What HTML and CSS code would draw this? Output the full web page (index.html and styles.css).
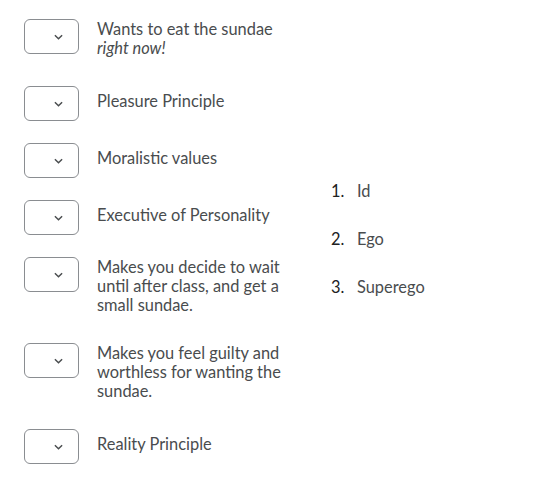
FILE: index.html
```html
<html lang="en">
<head>
    <meta charset="UTF-8">
    <title>Matching</title>
    <link rel="stylesheet" href="styles.css">
</head>
<body>
<div class="question">
    <div class="matches">
        <div class="row">
            <div class="select"><svg class="chev" viewBox="0 0 10 6"><path d="M1 1 L5 5 L9 1"/></svg></div>
            <div class="label">Wants to eat the sundae<br><em>right now!</em></div>
        </div>
        <div class="row">
            <div class="select"><svg class="chev" viewBox="0 0 10 6"><path d="M1 1 L5 5 L9 1"/></svg></div>
            <div class="label single">Pleasure Principle</div>
        </div>
        <div class="row">
            <div class="select"><svg class="chev" viewBox="0 0 10 6"><path d="M1 1 L5 5 L9 1"/></svg></div>
            <div class="label single">Moralistic values</div>
        </div>
        <div class="row">
            <div class="select"><svg class="chev" viewBox="0 0 10 6"><path d="M1 1 L5 5 L9 1"/></svg></div>
            <div class="label single">Executive of Personality</div>
        </div>
        <div class="row">
            <div class="select"><svg class="chev" viewBox="0 0 10 6"><path d="M1 1 L5 5 L9 1"/></svg></div>
            <div class="label">Makes you decide to wait until after class, and get a small sundae.</div>
        </div>
        <div class="row">
            <div class="select"><svg class="chev" viewBox="0 0 10 6"><path d="M1 1 L5 5 L9 1"/></svg></div>
            <div class="label">Makes you feel guilty and worthless for wanting the sundae.</div>
        </div>
        <div class="row">
            <div class="select"><svg class="chev" viewBox="0 0 10 6"><path d="M1 1 L5 5 L9 1"/></svg></div>
            <div class="label single">Reality Principle</div>
        </div>
    </div>
    <ol class="choices">
        <li><span class="num">1.</span>Id</li>
        <li><span class="num">2.</span>Ego</li>
        <li><span class="num">3.</span>Superego</li>
    </ol>
</div>
</body>
</html>
```

FILE: styles.css
```css
body {
    margin: 0;
    padding: 19px 0 0 24px;
    background: #fff;
    font-family: Lato, "Noto Sans", sans-serif;
    font-size: 16.4px;
    line-height: 19px;
    color: #494c4e;
}

.question {
    display: flex;
    align-items: center;
}

.matches {
    width: 290px;
}

.row {
    display: flex;
    align-items: flex-start;
    margin-bottom: 22px;
}

.row:last-child {
    margin-bottom: 0;
}

.select {
    flex: none;
    box-sizing: border-box;
    width: 55px;
    height: 35px;
    border: 1px solid #8a8d91;
    border-radius: 6px;
    display: flex;
    align-items: center;
    justify-content: flex-end;
    padding-right: 15px;
}

.chev {
    width: 9px;
    height: 6px;
    fill: none;
    stroke: #494c4e;
    stroke-width: 1.6;
}

.label {
    margin-left: 18px;
    width: 192px;
    padding-bottom: 7px;
}

.label.single {
    padding-top: 5px;
}

.choices {
    list-style: none;
    margin: -6px 0 0 17px;
    padding: 0;
}

.choices li {
    display: flex;
    margin-bottom: 29px;
}

.choices li:last-child {
    margin-bottom: 0;
}

.num {
    width: 26px;
    color: #202122;
}
```
